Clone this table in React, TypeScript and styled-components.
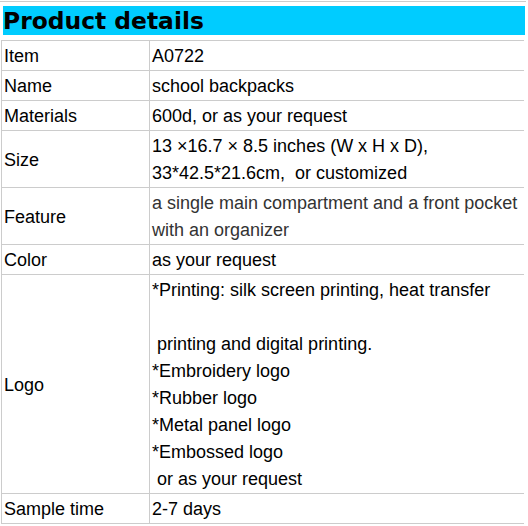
import React from 'react';
import styled, { createGlobalStyle } from 'styled-components';

const Global = createGlobalStyle`
  html, body { margin: 0; padding: 0; background: #fff; }
  body { font-family: "Liberation Sans", Arial, sans-serif; color: #000; }
`;

const Sheet = styled.div`
  width: 526px;
  padding-top: 1px;
`;

const TitleBar = styled.div`
  border-top: 1px solid #ccc;
  padding: 4px 1px 5px 3px;
`;

const Title = styled.h2`
  margin: 0;
  height: 29px;
  background: #00ccff;
  font-family: "DejaVu Sans", Verdana, sans-serif;
  font-weight: bold;
  font-size: 23.4px;
  line-height: 30px;
  color: #000;
  white-space: nowrap;
`;

const Table = styled.table`
  margin-left: 1px;
  width: 523px;
  border-collapse: separate;
  border-spacing: 0;
  table-layout: fixed;
  border-top: 1px solid #ccc;
`;

const Row = styled.tr``;

const Cell = styled.td<{ $tone?: string }>`
  border-left: 1px solid #ccc;
  border-bottom: 1px solid #ccc;
  padding: 2px 2px 0 2px;
  font-size: 18px;
  line-height: 27px;
  vertical-align: middle;
  white-space: pre-wrap;
  color: ${(p) => p.$tone || '#000'};
`;

const LabelCell = styled(Cell)`
  width: 143px;
`;

const Line = styled.div`
  min-height: 27px;
`;

type Item = { label: string; lines: string[]; tone?: string };

const rows: Item[] = [
  { label: 'Item', lines: ['A0722'] },
  { label: 'Name', lines: ['school backpacks'] },
  { label: 'Materials', lines: ['600d, or as your request'] },
  { label: 'Size', lines: ['13 \u00d716.7 \u00d7 8.5 inches (W x H x D),', '33*42.5*21.6cm,  or customized'] },
  { label: 'Feature', lines: ['a single main compartment and a front pocket', 'with an organizer'], tone: '#333' },
  { label: 'Color', lines: ['as your request'] },
  {
    label: 'Logo',
    lines: [
      '*Printing: silk screen printing, heat transfer',
      '',
      ' printing and digital printing.',
      '*Embroidery logo',
      '*Rubber logo',
      '*Metal panel logo',
      '*Embossed logo',
      ' or as your request',
    ],
  },
  { label: 'Sample time', lines: ['2-7 days'] },
];

export default function App() {
  return (
    <>
      <Global />
      <Sheet>
        <TitleBar>
          <Title>Product details</Title>
        </TitleBar>
        <Table>
          <tbody>
            {rows.map((r) => (
              <Row key={r.label}>
                <LabelCell>{r.label}</LabelCell>
                <Cell $tone={r.tone}>
                  {r.lines.map((l, i) => (
                    <Line key={i}>{l}</Line>
                  ))}
                </Cell>
              </Row>
            ))}
          </tbody>
        </Table>
      </Sheet>
    </>
  );
}
